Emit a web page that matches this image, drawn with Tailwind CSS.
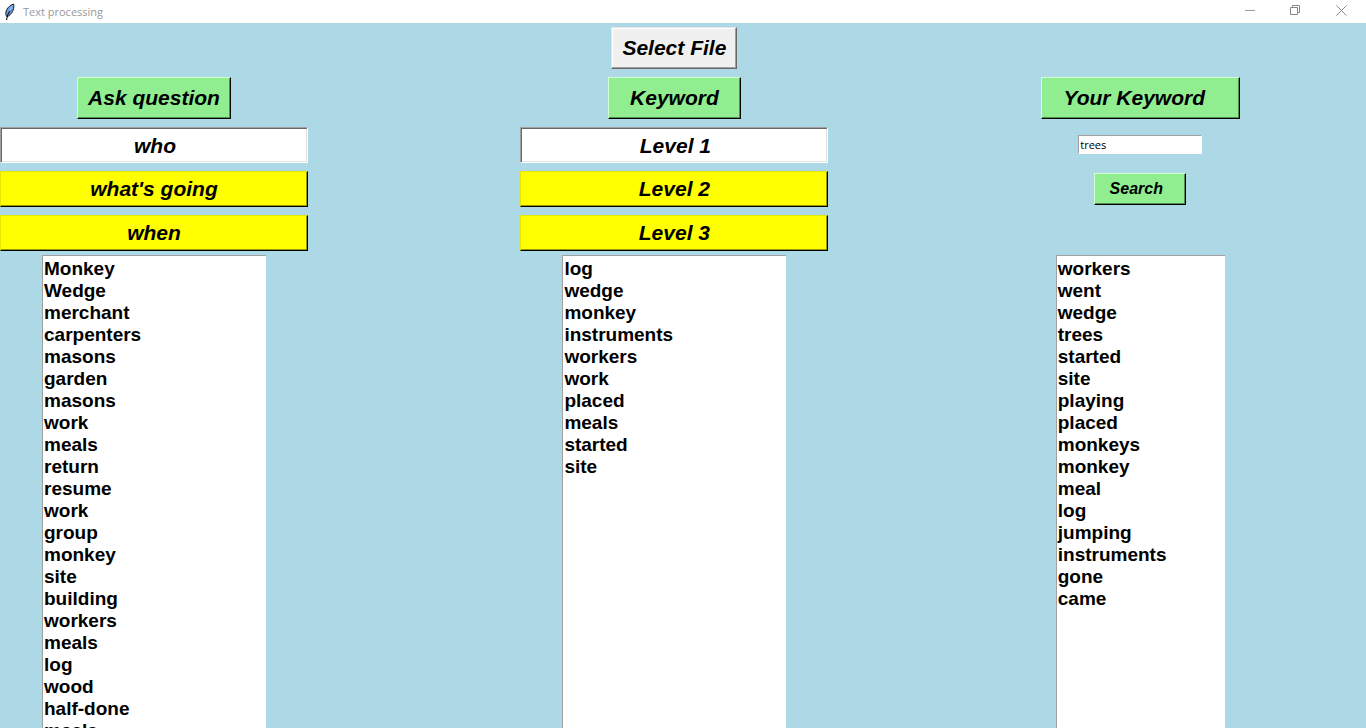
<!DOCTYPE html>
<html lang="en">
<head>
<meta charset="utf-8">
<title>Text processing</title>
<script src="https://cdn.jsdelivr.net/npm/@tailwindcss/browser@4"></script>
</head>
<body class="flex h-screen flex-col overflow-hidden bg-[#add8e6] font-['Liberation_Sans',Arial,sans-serif] text-black">
<header class="flex h-[23px] shrink-0 items-center justify-between bg-white">
  <div class="flex items-center gap-2 pl-[3px]">
    <svg class="h-[18px] w-3" viewBox="0 0 12 18" aria-hidden="true">
      <path d="M3.500 13.500C1.500 9 4 3.500 10.500 1c1 3-.2 9-5 12z" fill="#6a9ee8" stroke="#1c1c1c"/>
      <path d="M7.500 7C5.500 9.500 4 12.500 3.500 17" fill="none" stroke="#111" stroke-width="1.200"/>
      <path d="M9 3.500 6.500 8" stroke="#9cc4ff" stroke-width="1.200"/>
    </svg>
    <h1 class="font-['Open_Sans',sans-serif] text-[11px] leading-4 text-[#999]">Text processing</h1>
  </div>
  <div class="flex h-full pr-px pb-[2px]">
    <button class="grid w-[46px] place-items-center" aria-label="Minimize"><svg class="size-[11px]" viewBox="0 0 11 11"><path d="M0 5.500h10" stroke="#999" fill="none"/></svg></button>
    <button class="grid w-[45px] place-items-center" aria-label="Restore"><svg class="size-[11px]" viewBox="0 0 11 11"><path d="M.5 2.500h7v7h-7zM2.500 2.500v-2h7v7h-2" stroke="#888" fill="none"/></svg></button>
    <button class="grid w-[47px] place-items-center" aria-label="Close"><svg class="size-[11px]" viewBox="0 0 11 11"><path d="M.5.500l10 10M10.500.500l-10 10" stroke="#888" fill="none"/></svg></button>
  </div>
</header>
<main class="grid min-h-0 grow grid-cols-[8fr_8fr_5fr] grid-rows-[42px_42px_minmax(0,1fr)] gap-y-2 pt-1 text-[21px] font-bold italic leading-6">
  <div class="col-start-2 flex w-[308px] justify-center">
    <button class="w-[126px] border border-t-[#e3e3e3] border-l-[#e3e3e3] border-r-[#696969] border-b-[#696969] bg-[#f0f0f0] shadow-[inset_-1px_-1px_#a0a0a0,inset_1px_1px_#fff]">Select File</button>
  </div>
  <div class="col-start-1 row-start-2 flex w-[308px] justify-center">
    <button class="w-[154px] border border-t-[#d0ffd0] border-l-[#d0ffd0] border-r-black border-b-black bg-[#90ee90] shadow-[inset_-1px_-1px_#4f8f4f]">Ask question</button>
  </div>
  <div class="col-start-2 row-start-2 flex w-[308px] justify-center">
    <button class="w-[133px] border border-t-[#d0ffd0] border-l-[#d0ffd0] border-r-black border-b-black bg-[#90ee90] shadow-[inset_-1px_-1px_#4f8f4f]">Keyword</button>
  </div>
  <div class="col-start-3 row-start-2 flex w-[199px]">
    <button class="w-full border border-t-[#d0ffd0] border-l-[#d0ffd0] border-r-black border-b-black bg-[#90ee90] pr-3 shadow-[inset_-1px_-1px_#4f8f4f]">Your Keyword</button>
  </div>

  <section class="col-start-1 row-start-3 flex min-h-0 w-[308px] flex-col items-center">
    <div class="flex w-full flex-col gap-2">
      <button class="h-9 border border-t-[#a0a0a0] border-l-[#a0a0a0] border-r-white border-b-white bg-white pt-[2px] pl-[2px] shadow-[inset_1px_1px_#696969,inset_-1px_-1px_#e3e3e3]">who</button>
      <button class="h-9 border border-t-[#e6e600] border-l-[#e6e600] border-r-black border-b-black bg-[#ff0] shadow-[inset_-1px_-1px_#999900]">what's going</button>
      <button class="h-9 border border-t-[#e6e600] border-l-[#e6e600] border-r-black border-b-black bg-[#ff0] shadow-[inset_-1px_-1px_#999900]">when</button>
    </div>
    <ul class="mt-1 min-h-0 w-[224px] grow overflow-hidden border-t border-l border-[#a0a0a0] bg-white px-px pt-[2px] text-[19px] not-italic leading-[22px]">
      <li>Monkey</li><li>Wedge</li><li>merchant</li><li>carpenters</li><li>masons</li><li>garden</li><li>masons</li><li>work</li><li>meals</li><li>return</li><li>resume</li><li>work</li><li>group</li><li>monkey</li><li>site</li><li>building</li><li>workers</li><li>meals</li><li>log</li><li>wood</li><li>half-done</li><li>meals</li>
    </ul>
  </section>

  <section class="col-start-2 row-start-3 flex min-h-0 w-[308px] flex-col items-center">
    <div class="flex w-full flex-col gap-2">
      <button class="h-9 border border-t-[#a0a0a0] border-l-[#a0a0a0] border-r-white border-b-white bg-white pt-[2px] pl-[2px] shadow-[inset_1px_1px_#696969,inset_-1px_-1px_#e3e3e3]">Level 1</button>
      <button class="h-9 border border-t-[#e6e600] border-l-[#e6e600] border-r-black border-b-black bg-[#ff0] shadow-[inset_-1px_-1px_#999900]">Level 2</button>
      <button class="h-9 border border-t-[#e6e600] border-l-[#e6e600] border-r-black border-b-black bg-[#ff0] shadow-[inset_-1px_-1px_#999900]">Level 3</button>
    </div>
    <ul class="mt-1 min-h-0 w-[224px] grow overflow-hidden border-t border-l border-[#a0a0a0] bg-white px-px pt-[2px] text-[19px] not-italic leading-[22px]">
      <li>log</li><li>wedge</li><li>monkey</li><li>instruments</li><li>workers</li><li>work</li><li>placed</li><li>meals</li><li>started</li><li>site</li>
    </ul>
  </section>

  <section class="col-start-3 row-start-3 flex min-h-0 w-[199px] flex-col items-center">
    <form class="flex h-[124px] shrink-0 flex-col items-center pt-2">
      <input type="text" value="trees" aria-label="Your Keyword" class="h-[19px] w-[124px] border border-t-[#a0a0a0] border-l-[#a0a0a0] border-r-white border-b-white bg-white px-px font-['Open_Sans',sans-serif] text-[11px] font-normal not-italic leading-4 outline-none">
      <button type="button" class="mt-[19px] h-8 w-[92px] border border-t-[#d0ffd0] border-l-[#d0ffd0] border-r-black border-b-black bg-[#90ee90] pr-2 text-base shadow-[inset_-1px_-1px_#4f8f4f]">Search</button>
    </form>
    <ul class="mt-1 min-h-0 w-[169px] grow overflow-hidden border-t border-l border-[#a0a0a0] bg-white px-px pt-[2px] text-[19px] not-italic leading-[22px]">
      <li>workers</li><li>went</li><li>wedge</li><li>trees</li><li>started</li><li>site</li><li>playing</li><li>placed</li><li>monkeys</li><li>monkey</li><li>meal</li><li>log</li><li>jumping</li><li>instruments</li><li>gone</li><li>came</li>
    </ul>
  </section>
</main>
</body>
</html>
